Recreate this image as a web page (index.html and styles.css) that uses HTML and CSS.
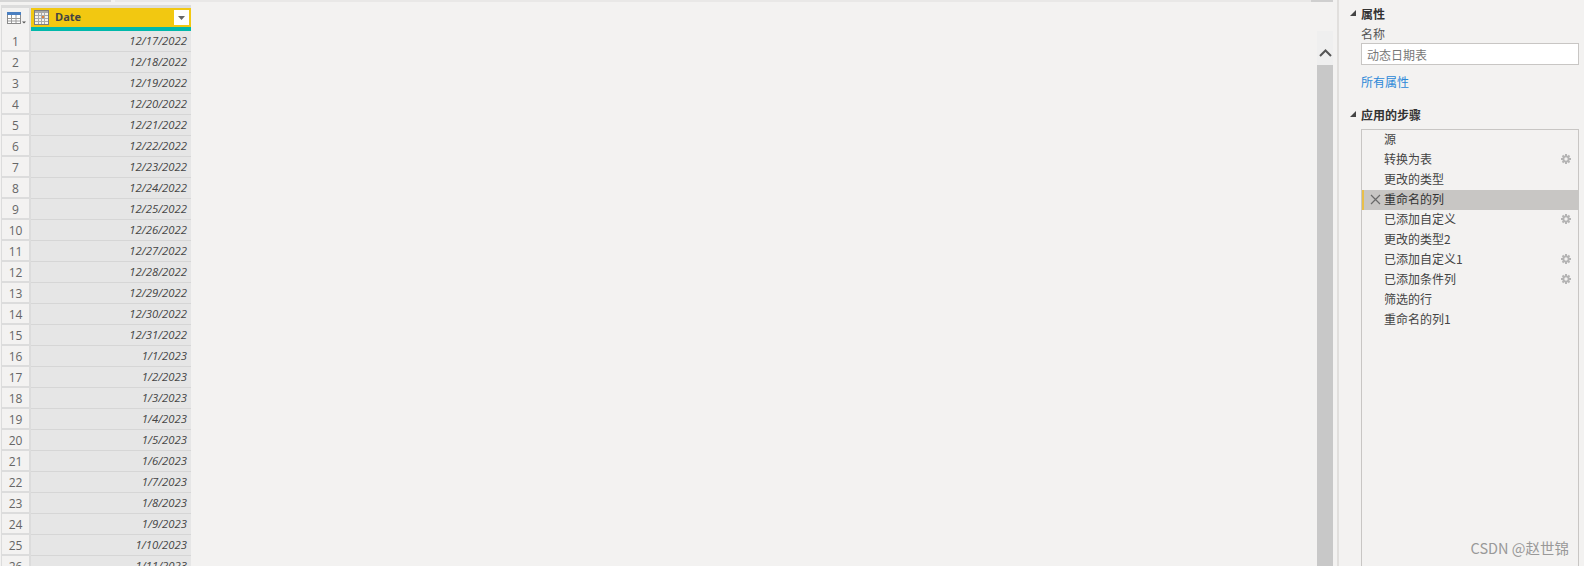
FILE: index.html
```html
<!DOCTYPE html>

<html><head>

<title>动态日期表</title>

<link rel="stylesheet" href="styles.css">

</head><body>

<div class="main">
  <div class="strip">
    <div class="strip-tab"></div>
    <div class="strip-rest"></div>
    <div class="strip-end"></div>
  </div>

  <div class="content">
    <div class="grid">
      <div class="head">
        <div class="corner">
          <svg width="20" height="14" viewBox="0 0 20 14">
            <rect x="0.5" y="1.5" width="13" height="11" fill="#fff" stroke="#8a8a8a"/>
            <rect x="0" y="1" width="14" height="3" fill="#4a7fc1"/>
            <path d="M4.5 4v8M9 4v8M1 7.5h12M1 10h12" stroke="#9a9a9a" fill="none"/>
            <path d="M15 10.5h4l-2 2z" fill="#555"/>
          </svg>
        </div>
        <div class="date-head">
          <svg class="cal" width="15" height="15" viewBox="0 0 15 15">
            <rect x="0.5" y="0.5" width="14" height="14" fill="#f4f1ea" stroke="#7d7d7d"/>
            <rect x="1" y="1" width="13" height="2" fill="#a8a8a8"/>
            <path d="M1 5.5h13M1 8.5h13M1 11.5h13M4.5 3v11M7.5 3v11M10.5 3v11" stroke="#a9a9a9" fill="none"/>
            <rect x="8" y="6" width="2" height="2" fill="#e0813a"/>
          </svg>
          <span class="date-title">Date</span>
          <span class="filter"><svg width="7" height="4" viewBox="0 0 7 4"><path d="M0 0h7L3.500 4z" fill="#666"/></svg></span>
        </div>
      </div>
      <div class="row"><div class="num">1</div><div class="val">12/17/2022</div></div>
      <div class="row"><div class="num">2</div><div class="val">12/18/2022</div></div>
      <div class="row"><div class="num">3</div><div class="val">12/19/2022</div></div>
      <div class="row"><div class="num">4</div><div class="val">12/20/2022</div></div>
      <div class="row"><div class="num">5</div><div class="val">12/21/2022</div></div>
      <div class="row"><div class="num">6</div><div class="val">12/22/2022</div></div>
      <div class="row"><div class="num">7</div><div class="val">12/23/2022</div></div>
      <div class="row"><div class="num">8</div><div class="val">12/24/2022</div></div>
      <div class="row"><div class="num">9</div><div class="val">12/25/2022</div></div>
      <div class="row"><div class="num">10</div><div class="val">12/26/2022</div></div>
      <div class="row"><div class="num">11</div><div class="val">12/27/2022</div></div>
      <div class="row"><div class="num">12</div><div class="val">12/28/2022</div></div>
      <div class="row"><div class="num">13</div><div class="val">12/29/2022</div></div>
      <div class="row"><div class="num">14</div><div class="val">12/30/2022</div></div>
      <div class="row"><div class="num">15</div><div class="val">12/31/2022</div></div>
      <div class="row"><div class="num">16</div><div class="val">1/1/2023</div></div>
      <div class="row"><div class="num">17</div><div class="val">1/2/2023</div></div>
      <div class="row"><div class="num">18</div><div class="val">1/3/2023</div></div>
      <div class="row"><div class="num">19</div><div class="val">1/4/2023</div></div>
      <div class="row"><div class="num">20</div><div class="val">1/5/2023</div></div>
      <div class="row"><div class="num">21</div><div class="val">1/6/2023</div></div>
      <div class="row"><div class="num">22</div><div class="val">1/7/2023</div></div>
      <div class="row"><div class="num">23</div><div class="val">1/8/2023</div></div>
      <div class="row"><div class="num">24</div><div class="val">1/9/2023</div></div>
      <div class="row"><div class="num">25</div><div class="val">1/10/2023</div></div>
      <div class="row"><div class="num">26</div><div class="val">1/11/2023</div></div>
    </div>

    <div class="scroll">
      <div class="scroll-up">
        <svg width="13" height="8" viewBox="0 0 13 8"><path d="M1 7l5.500-5.500L12 7" fill="none" stroke="#555" stroke-width="2"/></svg>
      </div>
      <div class="scroll-thumb"></div>
    </div>
  </div>
</div>

<div class="panel">
  <h3 class="section"><span class="arrow"></span>属性</h3>
  <div class="label">名称</div>
  <div class="name-box">动态日期表</div>
  <a class="all-props">所有属性</a>

  <h3 class="section steps-title"><span class="arrow"></span>应用的步骤</h3>
  <div class="steps">
    <div class="step">源</div>
    <div class="step">转换为表
      <svg class="gear" width="12" height="12" viewBox="0 0 12 12"><use href="#gear"/></svg></div>
    <div class="step">更改的类型</div>
    <div class="step selected">
      <svg class="del" width="11" height="11" viewBox="0 0 11 11"><path d="M1 1l9 9M10 1l-9 9" stroke="#6a6a6a" stroke-width="1.200" fill="none"/></svg>
      重命名的列</div>
    <div class="step">已添加自定义
      <svg class="gear" width="12" height="12" viewBox="0 0 12 12"><use href="#gear"/></svg></div>
    <div class="step">更改的类型2</div>
    <div class="step">已添加自定义1
      <svg class="gear" width="12" height="12" viewBox="0 0 12 12"><use href="#gear"/></svg></div>
    <div class="step">已添加条件列
      <svg class="gear" width="12" height="12" viewBox="0 0 12 12"><use href="#gear"/></svg></div>
    <div class="step">筛选的行</div>
    <div class="step">重命名的列1</div>
  </div>
  <div class="watermark">CSDN @赵世锦</div>
</div>

<svg class="defs" width="0" height="0">
  <defs>
    <g id="gear">
      <path d="M6 1v10M1 6h10M2.500 2.500l7 7M9.500 2.500l-7 7" stroke="#b4b4b4" stroke-width="2" fill="none"/>
      <circle cx="6" cy="6" r="3.600" fill="#b4b4b4"/>
      <circle cx="6" cy="6" r="1.700" fill="#f3f2f1"/>
    </g>
  </defs>
</svg>

</body></html>
```

FILE: styles.css
```css
html, body {
  margin: 0;
  height: 566px;
  overflow: hidden;
  }
body {
  display: flex;
  background-color: #f3f2f1;
  font-family: "Open Sans", "Noto Sans CJK SC", sans-serif;
  color: #444;
  }
.main {
  width: 1337px;
  display: flex;
  flex-direction: column;
  }
.strip {
  display: flex;
  height: 2px;
  flex: none;
  }
.strip-tab {
  width: 111px;
  background-color: #d6d6d6;
  margin-right: 4px;
  }
.strip-rest {
  flex: 1;
  background-color: #e9e8e7;
  }
.strip-end {
  width: 22px;
  background-color: #cfcfcf;
  margin-right: 4px;
  }
.content {
  flex: 1;
  display: flex;
  justify-content: space-between;
  }

/* data grid */
.grid {
  width: 189px;
  margin: 3px 0 0 1px;
  background-color: #dcdcdc;
  padding: 3px 0 0 1px;
  }
.head {
  display: flex;
  height: 23px;
  }
.corner {
  width: 27px;
  height: 23px;
  margin-right: 2px;
  background-color: #f3f2f1;
  box-sizing: border-box;
  padding: 3px 0 0 5px;
  }
.corner svg {
  display: block;
  }
.date-head {
  width: 160px;
  height: 19px;
  display: flex;
  align-items: center;
  background-color: #f2c811;
  border-bottom: 4px solid #01b8aa;
  }
.cal {
  margin-left: 3px;
  }
.date-title {
  margin: -3px 0 0 6px;
  font-size: 11px;
  font-weight: bold;
  color: #444;
  flex: 1;
  }
.filter {
  width: 15px;
  height: 15px;
  margin-right: 2px;
  background-color: #fff;
  display: flex;
  align-items: center;
  justify-content: center;
  }
.row {
  display: flex;
  height: 21px;
  }
.num {
  width: 27px;
  height: 19px;
  margin-right: 2px;
  background-color: #f3f2f1;
  border-bottom: 2px solid #dcdcdc;
  text-align: center;
  font-size: 12px;
  line-height: 21px;
  color: #666;
  }
.val {
  width: 156px;
  height: 20px;
  padding-right: 4px;
  background-color: #e6e6e6;
  border-bottom: 1px solid #d6d6d6;
  text-align: right;
  font-size: 11.300px;
  font-style: italic;
  line-height: 20px;
  color: #444;
  }

/* scrollbar */
.scroll {
  width: 16px;
  margin: 29px 4px 0 0;
  display: flex;
  flex-direction: column;
  }
.scroll-up {
  height: 34px;
  background-color: #efefef;
  display: flex;
  align-items: flex-end;
  justify-content: center;
  padding-bottom: 8px;
  box-sizing: border-box;
  }
.scroll-thumb {
  flex: 1;
  background-color: #c8c8c8;
  }

/* right panel */
.panel {
  width: 218px;
  border-left: 2px solid #e1dfdd;
  padding: 0 5px 0 22px;
  font-family: "Noto Sans CJK SC", sans-serif;
  font-size: 12px;
  position: relative;
  }
.section {
  margin: 5px 0 0;
  font-size: 12px;
  line-height: 17px;
  font-weight: bold;
  color: #333;
  position: relative;
  }
.arrow {
  position: absolute;
  left: -11px;
  top: 5px;
  width: 0;
  height: 0;
  border-left: 6px solid transparent;
  border-bottom: 6px solid #444;
  }
.label {
  margin-top: 2px;
  line-height: 19px;
  color: #555;
  }
.name-box {
  height: 19px;
  padding: 1px 5px 0;
  background-color: #fff;
  border: 1px solid #c8c6c4;
  line-height: 20px;
  color: #777;
  }
.all-props {
  display: block;
  margin-top: 8px;
  line-height: 18px;
  color: #2b88d8;
  }
.steps-title {
  margin-top: 15px;
  }
.steps {
  height: 440px;
  margin-top: 6px;
  border: 1px solid #c8c6c4;
  border-bottom: 0;
  box-sizing: border-box;
  }
.step {
  height: 20px;
  line-height: 18px;
  padding-left: 22px;
  color: #444;
  position: relative;
  }
.selected {
  background-color: #c8c6c4;
  box-shadow: inset 2px 0 0 #e8bf4a;
  color: #333;
  }
.gear {
  position: absolute;
  right: 6px;
  top: 3px;
  }
.del {
  position: absolute;
  left: 8px;
  top: 4px;
  }
.watermark {
  position: absolute;
  right: 15px;
  bottom: 9px;
  font-size: 14.500px;
  line-height: 18px;
  color: #999;
  }
.defs {
  position: absolute;
  }
```
